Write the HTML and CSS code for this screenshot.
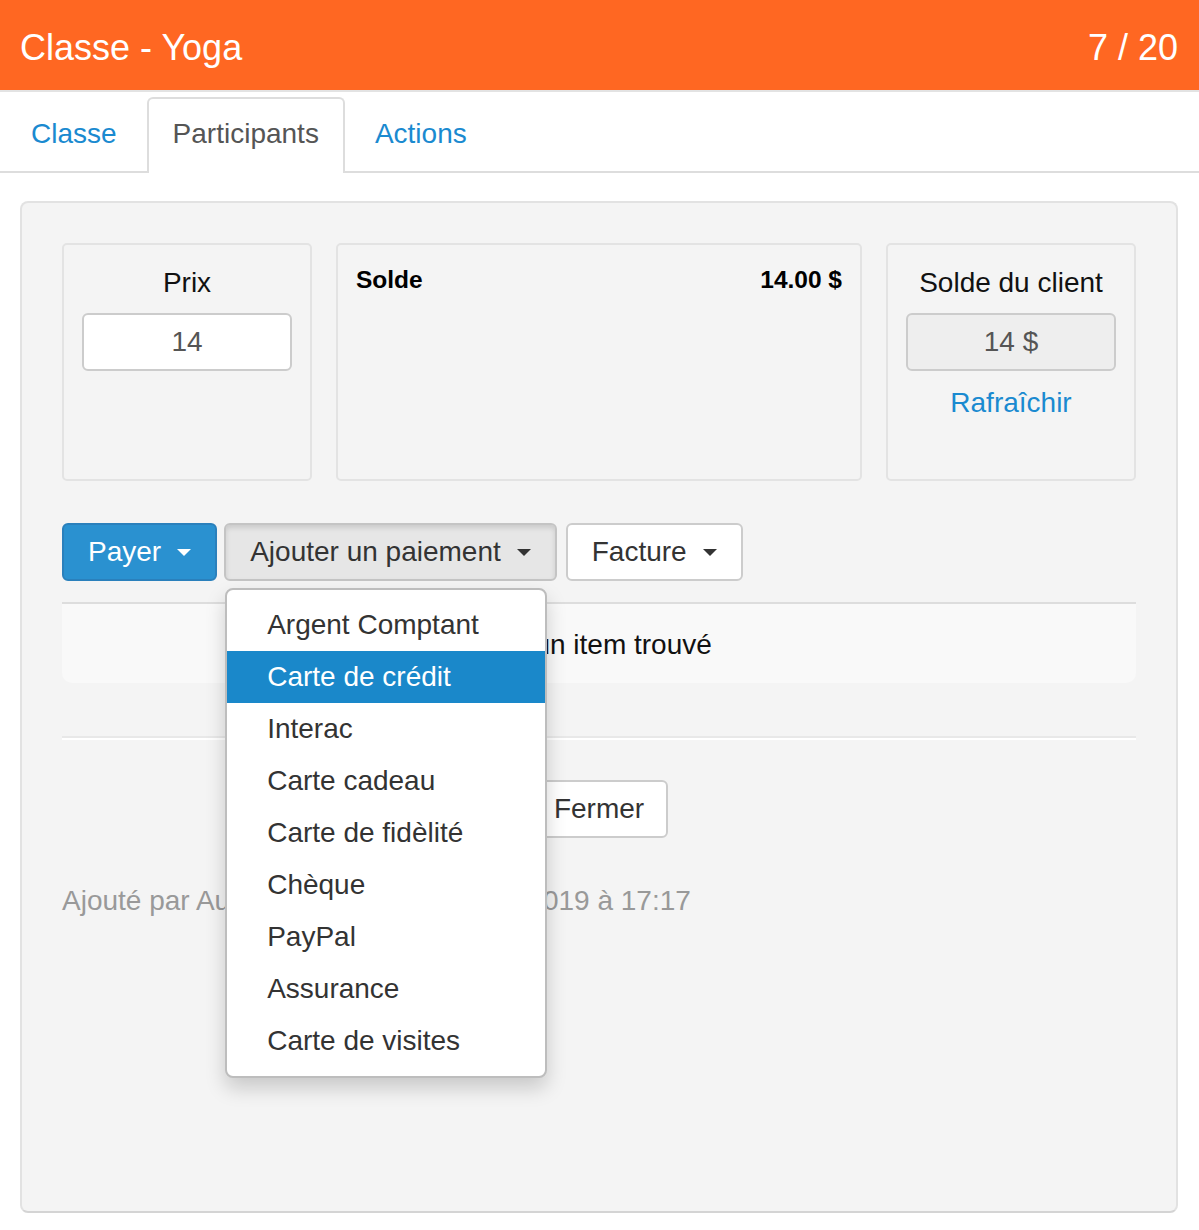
FILE: index.html
```html
<!DOCTYPE html>
<html lang="fr">
<head>
<meta charset="utf-8">
<title>Classe - Yoga</title>
<link rel="stylesheet" href="styles.css">
</head>
<body>
<header class="topbar">
  <h1 class="title">Classe - Yoga</h1>
  <span class="count">7 / 20</span>
</header>
<nav class="tabs">
  <a class="tab">Classe</a>
  <a class="tab active">Participants</a>
  <a class="tab">Actions</a>
</nav>
<main class="panel">
  <section class="boxes">
    <div class="box center">
      <div class="label">Prix</div>
      <div class="field">14</div>
    </div>
    <div class="box solde">
      <span>Solde</span>
      <span>14.00 $</span>
    </div>
    <div class="box center">
      <div class="label">Solde du client</div>
      <div class="field readonly">14 $</div>
      <a class="link">Rafraîchir</a>
    </div>
  </section>
  <section class="actions">
    <button class="btn primary">Payer <span class="caret"></span></button>
    <div class="dropdown">
      <button class="btn pressed">Ajouter un paiement <span class="caret"></span></button>
      <ul class="menu">
        <li>Argent Comptant</li>
        <li class="hl">Carte de crédit</li>
        <li>Interac</li>
        <li>Carte cadeau</li>
        <li>Carte de fidèlité</li>
        <li>Chèque</li>
        <li>PayPal</li>
        <li>Assurance</li>
        <li>Carte de visites</li>
      </ul>
    </div>
    <button class="btn facture">Facture <span class="caret"></span></button>
  </section>
  <div class="empty">Aucun item trouvé</div>
  <hr class="sep">
  <div class="footer-btns">
    <button class="btn">Fermer</button>
  </div>
  <p class="meta">Ajouté par Audrey Tremblay le 2 avril 2019 à 17:17</p>
</main>
</body>
</html>
```
FILE: styles.css
```css
* { box-sizing: border-box; }
html, body { margin: 0; padding: 0; background: #fff; }
body {
  font-family: "Liberation Sans", Arial, Helvetica, sans-serif;
  font-size: 28px;
  color: #111;
  width: 1199px;
  height: 1230px;
  overflow: hidden;
}
.topbar {
  height: 92px;
  background: #ff6722;
  border-bottom: 2px solid #e3e3e3;
  display: flex;
  align-items: center;
  justify-content: space-between;
  padding: 6px 21px 0 20px;
  color: #fff;
}
.title { margin: 0; font-size: 36px; font-weight: normal; line-height: 1; }
.count { font-size: 36px; line-height: 1; }

.tabs {
  display: flex;
  padding: 5px 0 0 5px;
  border-bottom: 2px solid #ddd;
  height: 81px;
}
.tab {
  display: block;
  height: 76px;
  padding: 16px 25px 0;
  margin-right: 4px;
  border: 1px solid transparent;
  border-radius: 6px 6px 0 0;
  color: #1a8ad0;
  line-height: 40px;
}
.tab.active {
  color: #555;
  background: #fff;
  border-color: #ddd;
  border-bottom-color: #fff;
  border-width: 2px 2px 0 2px;
  padding: 15px 24px 0;
}

.panel {
  margin: 28px 21px 0 20px;
  height: 1012px;
  background: #f4f4f4;
  border: 2px solid #e2e2e2;
  border-bottom-color: #d4d4d4;
  border-radius: 8px;
  padding: 40px 40px;
}
.boxes {
  display: grid;
  grid-template-columns: 250px 1fr 250px;
  gap: 24px;
}
.box {
  min-height: 238px;
  border: 2px solid #e3e3e3;
  border-radius: 5px;
  background: #f4f4f4;
  padding: 18px 18px;
}
.box.center { text-align: center; }
.label { line-height: 40px; }
.field {
  margin-top: 10px;
  height: 58px;
  line-height: 54px;
  background: #fff;
  border: 2px solid #ccc;
  border-radius: 6px;
  color: #555;
  font-size: 28px;
}
.field.readonly { background: #eee; }
.link { display: block; margin-top: 12px; line-height: 40px; color: #1a8ad0; }
.solde {
  display: flex;
  justify-content: space-between;
  align-items: flex-start;
  font-weight: bold;
  font-size: 24.5px;
  line-height: 34px;
  color: #000;
}

.actions {
  display: flex;
  margin-top: 42px;
  align-items: flex-start;
}
.btn {
  font-family: inherit;
  font-size: 28px;
  height: 58px;
  line-height: 40px;
  padding: 0 24px;
  border: 2px solid #ccc;
  border-radius: 6px;
  background: #fff;
  color: #333;
  display: inline-flex;
  align-items: center;
  cursor: pointer;
}
.btn.primary {
  background: #2a91d0;
  border-color: #2a80bc;
  color: #fff;
  margin-right: 7px;
}
.btn.pressed {
  background: #e6e6e6;
  border-color: #c4c4c4;
  box-shadow: inset 0 3px 5px rgba(0,0,0,0.12);
}
.btn.facture { margin-left: 9px; }
.caret {
  display: inline-block;
  width: 0; height: 0;
  margin-left: 16px;
  border-top: 7px solid currentColor;
  border-left: 7px solid transparent;
  border-right: 7px solid transparent;
}
.dropdown { position: relative; }
.menu {
  position: absolute;
  left: 1px;
  top: 65px;
  width: 322px;
  margin: 0;
  padding: 9px 0;
  list-style: none;
  background: #fff;
  border: 2px solid #bdbdbd;
  border-radius: 8px;
  box-shadow: 0 10px 20px rgba(0,0,0,0.18);
  z-index: 10;
}
.menu li {
  height: 52px;
  line-height: 52px;
  padding-left: 40px;
  color: #333;
}
.menu li.hl { background: #1a88ca; color: #fff; }

.empty {
  margin-top: 21px;
  height: 81px;
  border-top: 2px solid #ddd;
  background: #f9f9f9;
  border-radius: 0 0 10px 10px;
  text-align: center;
  line-height: 82px;
  color: #111;
}
.sep {
  margin: 53px 0 0;
  border: 0;
  border-top: 2px solid #e8e8e8;
  border-bottom: 2px solid #fff;
  height: 0;
}
.footer-btns {
  margin-top: 40px;
  display: flex;
  justify-content: center;
}
.footer-btns .btn { width: 138px; justify-content: center; }
.meta {
  margin: 43px 0 0;
  line-height: 40px;
  color: #999;
}
```
